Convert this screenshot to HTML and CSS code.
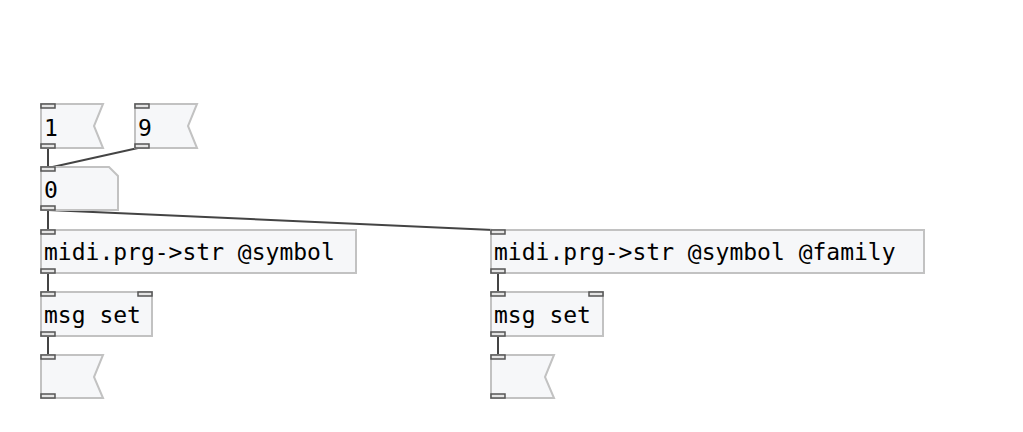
FILE: index.html
```html
<!DOCTYPE html>
<html lang="en">
<head>
  <meta charset="UTF-8" />
  <meta name="viewport" content="width=device-width, initial-scale=1.0"/>
  <title>midi.prg-&gt;str help</title>
  <link rel="stylesheet" href="styles.css">
</head>
<body>
  <svg class="patch" width="1023" height="432" viewBox="0 0 1023 432">
    <!-- wires -->
    <line class="wire" x1="48" y1="148" x2="48" y2="168"/>
    <line class="wire" x1="138" y1="148" x2="48" y2="168"/>
    <line class="wire" x1="48" y1="210" x2="48" y2="230"/>
    <line class="wire" x1="48" y1="210" x2="493" y2="230"/>
    <line class="wire" x1="48" y1="273" x2="48" y2="293"/>
    <line class="wire" x1="48" y1="336" x2="48" y2="355"/>
    <line class="wire" x1="498" y1="273" x2="498" y2="293"/>
    <line class="wire" x1="498" y1="336" x2="498" y2="355"/>

    <!-- msg 1 -->
    <path class="box" d="M41,104 H103 L94,126 L103,148 H41 Z"/>
    <text class="label" x="44" y="136">1</text>
    <rect class="inlet" x="41" y="104" width="14" height="4"/>
    <rect class="inlet" x="41" y="144" width="14" height="4"/>

    <!-- msg 9 -->
    <path class="box" d="M135,104 H197 L188,126 L197,148 H135 Z"/>
    <text class="label" x="138" y="136">9</text>
    <rect class="inlet" x="135" y="104" width="14" height="4"/>
    <rect class="inlet" x="135" y="144" width="14" height="4"/>

    <!-- float atom -->
    <path class="box" d="M41,167 H109 L118,176 V210 H41 Z"/>
    <text class="label" x="44" y="198">0</text>
    <rect class="inlet" x="41" y="167" width="14" height="4"/>
    <rect class="inlet" x="41" y="206" width="14" height="4"/>

    <!-- left chain -->
    <rect class="box" x="41" y="230" width="315" height="43"/>
    <text class="label" x="44" y="260">midi.prg-&gt;str @symbol</text>
    <rect class="inlet" x="41" y="230" width="14" height="4"/>
    <rect class="inlet" x="41" y="269" width="14" height="4"/>

    <rect class="box" x="41" y="292" width="111" height="44"/>
    <text class="label" x="44" y="323">msg set</text>
    <rect class="inlet" x="41" y="292" width="14" height="4"/>
    <rect class="inlet" x="138" y="292" width="14" height="4"/>
    <rect class="inlet" x="41" y="332" width="14" height="4"/>

    <path class="box" d="M41,355 H103 L94,377 L103,398 H41 Z"/>
    <rect class="inlet" x="41" y="355" width="14" height="4"/>
    <rect class="inlet" x="41" y="394" width="14" height="4"/>

    <!-- right chain -->
    <rect class="box" x="491" y="230" width="433" height="43"/>
    <text class="label" x="494" y="260">midi.prg-&gt;str @symbol @family</text>
    <rect class="inlet" x="491" y="230" width="14" height="4"/>
    <rect class="inlet" x="491" y="269" width="14" height="4"/>

    <rect class="box" x="491" y="292" width="112" height="44"/>
    <text class="label" x="494" y="323">msg set</text>
    <rect class="inlet" x="491" y="292" width="14" height="4"/>
    <rect class="inlet" x="589" y="292" width="14" height="4"/>
    <rect class="inlet" x="491" y="332" width="14" height="4"/>

    <path class="box" d="M491,355 H554 L545,377 L554,398 H491 Z"/>
    <rect class="inlet" x="491" y="355" width="14" height="4"/>
    <rect class="inlet" x="491" y="394" width="14" height="4"/>
  </svg>
</body>
</html>
```

FILE: styles.css
```css
body {
  margin: 0;
  background: #fff;
}
.patch {
  display: block;
}
.wire {
  stroke: #444;
  stroke-width: 2;
}
.box {
  fill: #f6f7f9;
  stroke: #c2c2c2;
  stroke-width: 2;
}
.inlet {
  fill: #e4e4e4;
  stroke: #555;
  stroke-width: 1.5;
}
.label {
  font-family: "DejaVu Sans Mono", monospace;
  font-size: 23px;
  fill: #000;
}
```
